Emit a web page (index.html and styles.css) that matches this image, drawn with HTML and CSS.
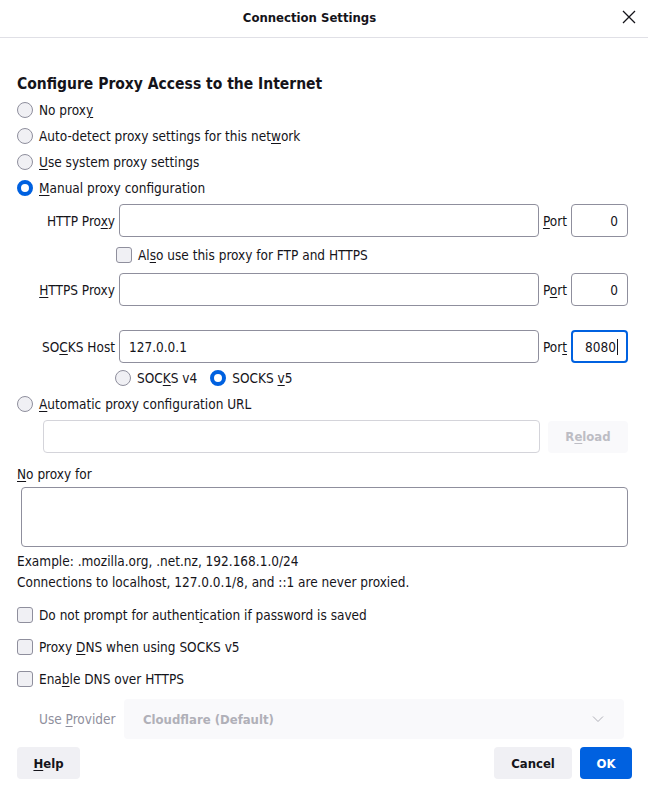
FILE: index.html
```html
<!DOCTYPE html>
<html>
<head>
<meta charset="utf-8">
<title>Connection Settings</title>
<link rel="stylesheet" href="styles.css">
</head>
<body>
<div class="dialog">
  <header class="titlebar">
    <div class="title">Connection Settings</div>
    <button class="close" aria-label="Close">
      <svg width="16" height="16" viewBox="0 0 16 16"><path d="M2 2L14 14M14 2L2 14" stroke="#15141a" stroke-width="1.3" fill="none"/></svg>
    </button>
  </header>

  <main class="content">
    <h1 class="heading">Configure Proxy Access to the Internet</h1>

    <div class="radio-row"><span class="radio"></span><span>No prox<u>y</u></span></div>
    <div class="radio-row"><span class="radio"></span><span>Auto-detect proxy settings for this net<u>w</u>ork</span></div>
    <div class="radio-row"><span class="radio"></span><span><u>U</u>se system proxy settings</span></div>
    <div class="radio-row"><span class="radio checked"></span><span><u>M</u>anual proxy configuration</span></div>

    <div class="proxy-grid">
      <div class="plabel">HTTP Pro<u>x</u>y</div>
      <div class="field"></div>
      <div class="portlabel"><u>P</u>ort</div>
      <div class="field port">0</div>

      <div class="check-cell"><span class="checkbox"></span><span>Al<u>s</u>o use this proxy for FTP and HTTPS</span></div>

      <div class="plabel"><u>H</u>TTPS Proxy</div>
      <div class="field"></div>
      <div class="portlabel">P<u>o</u>rt</div>
      <div class="field port">0</div>

      <div class="spacer"></div>

      <div class="plabel">SO<u>C</u>KS Host</div>
      <div class="field">127.0.0.1</div>
      <div class="portlabel">Por<u>t</u></div>
      <div class="field port focused">8080<span class="caret"></span></div>

      <div class="socks-cell">
        <span class="radio"></span><span>SOC<u>K</u>S v4</span>
        <span class="radio checked v5"></span><span>SOCKS <u>v</u>5</span>
      </div>
    </div>

    <div class="radio-row auto"><span class="radio"></span><span><u>A</u>utomatic proxy configuration URL</span></div>
    <div class="url-row">
      <div class="field disabled"></div>
      <button class="btn reload" disabled>R<u>e</u>load</button>
    </div>

    <div class="label-line"><u>N</u>o proxy for</div>
    <div class="textarea"></div>
    <div class="note first">Example: .mozilla.org, .net.nz, 192.168.1.0/24</div>
    <div class="note">Connections to localhost, 127.0.0.1/8, and ::1 are never proxied.</div>

    <div class="checks">
      <div class="check-row"><span class="checkbox"></span><span>Do not prompt for authent<u>i</u>cation if password is saved</span></div>
      <div class="check-row"><span class="checkbox"></span><span>Proxy <u>D</u>NS when using SOCKS v5</span></div>
      <div class="check-row"><span class="checkbox"></span><span>Ena<u>b</u>le DNS over HTTPS</span></div>
    </div>

    <div class="provider-row">
      <div class="provider-label">Use <u>P</u>rovider</div>
      <div class="select">
        <span>Cloudflare (Default)</span>
        <svg width="12" height="8" viewBox="0 0 12 8"><path d="M1 1.5L6 6.5L11 1.5" stroke="#b0b0b8" stroke-width="1" fill="none"/></svg>
      </div>
    </div>
  </main>

  <footer class="buttons">
    <button class="btn help"><u>H</u>elp</button>
    <div class="right">
      <button class="btn cancel">Cancel</button>
      <button class="btn ok">OK</button>
    </div>
  </footer>
</div>
</body>
</html>
```
FILE: styles.css
```css
* { box-sizing: border-box; }
html, body { margin: 0; padding: 0; background: #fff; }
body {
  font-family: "DejaVu Sans", sans-serif;
  font-stretch: condensed;
  font-size: 13.5px;
  color: #15141a;
  width: 648px;
  height: 787px;
  overflow: hidden;
}
u { text-decoration: underline; text-underline-offset: 2px; text-decoration-thickness: 1px; }
button { font-family: inherit; font-stretch: condensed; }

.titlebar {
  height: 38px;
  border-bottom: 1px solid #e0e0e6;
  display: flex;
  align-items: center;
  justify-content: center;
  padding-right: 29px;
  position: relative;
}
.title { font-weight: bold; font-size: 13px; padding-bottom: 3px; }
.close {
  position: absolute;
  right: 11px;
  top: 9px;
  width: 16px; height: 16px;
  padding: 0; border: 0; background: transparent;
  display: flex;
}

.content { padding: 0 20px 0 17px; }
.heading {
  font-size: 15.5px;
  font-weight: bold;
  margin: 36px 0 0;
  line-height: 20px;
  height: 20px;
}

.radio-row {
  height: 26px;
  display: flex;
  align-items: center;
  gap: 6px;
}
.heading + .radio-row { margin-top: 3px; }
.radio {
  width: 16px; height: 16px;
  border-radius: 50%;
  border: 1px solid #8f8f9d;
  background: #f0f0f4;
  flex: none;
}
.radio.checked {
  border: 4px solid #0061e0;
  background: #fff;
}

.proxy-grid {
  margin-top: 3px;
  margin-left: 22px;
  display: grid;
  grid-template-columns: 76px 1fr auto 57px;
  column-gap: 4px;
  align-items: center;
}
.plabel { text-align: right; white-space: nowrap; }
.portlabel { white-space: nowrap; }
.field {
  height: 33px;
  border: 1px solid #8f8f9d;
  border-radius: 4px;
  background: #fff;
  display: flex;
  align-items: center;
  padding: 0 9px;
}
.field.port { justify-content: flex-end; padding-right: 9px; }
.field.focused { border: 2px solid #0061e0; padding-right: 8px; }
.caret { display: inline-block; width: 1px; height: 16px; background: #15141a; margin-left: 1px; }
.field.disabled { border-color: #d4d4da; flex: 1; }

.check-cell {
  grid-column: 1 / -1;
  height: 36px;
  display: flex;
  align-items: center;
  gap: 6px;
  padding-left: 77px;
  padding-bottom: 1px;
}
.checkbox {
  width: 16px; height: 16px;
  border: 1px solid #8f8f9d;
  border-radius: 3px;
  background: #f0f0f4;
  flex: none;
}
.spacer { grid-column: 1 / -1; height: 24px; }
.socks-cell {
  grid-column: 1 / -1;
  height: 28px;
  display: flex;
  align-items: center;
  gap: 6px;
  padding-left: 76px;
  padding-top: 2px;
}
.socks-cell .v5 { margin-left: 7px; }

.url-row {
  margin: 3px 0 0 26px;
  display: flex;
  gap: 8px;
  align-items: center;
}
.btn {
  height: 32px;
  border: 0;
  border-radius: 4px;
  background: #f0f0f4;
  font-weight: bold;
  font-size: 13px;
  color: #15141a;
  padding: 0 16px;
}
.reload { width: 80px; background: #f9f9fb; color: #bdbdc4; }

.label-line { margin-top: 11px; height: 20px; line-height: 20px; }
.textarea {
  margin: 3px 0 0 4px;
  height: 60px;
  border: 1px solid #8f8f9d;
  border-radius: 4px;
}
.note { height: 21px; line-height: 21px; }
.note.first { margin-top: 4px; }

.checks { margin-top: 6px; }
.check-row { height: 32px; display: flex; align-items: center; gap: 6px; }

.provider-row {
  margin-top: 4px;
  display: flex;
  align-items: center;
  padding-left: 22px;
  margin-right: 4px;
}
.provider-label { color: #8f8f9d; width: 85px; }
.select {
  flex: 1;
  height: 40px;
  background: #f9f9fb;
  border-radius: 4px;
  display: flex;
  align-items: center;
  justify-content: space-between;
  padding: 0 20px 0 19px;
  font-weight: bold;
  font-size: 13px;
  color: #b0b0b8;
}

.buttons {
  margin-top: 8px;
  padding: 0 16px 0 17px;
  display: flex;
  justify-content: space-between;
}
.buttons .right { display: flex; gap: 8px; }
.help { width: 63px; }
.cancel { width: 78px; }
.ok { width: 52px; background: #0061e0; color: #fff; }
```
